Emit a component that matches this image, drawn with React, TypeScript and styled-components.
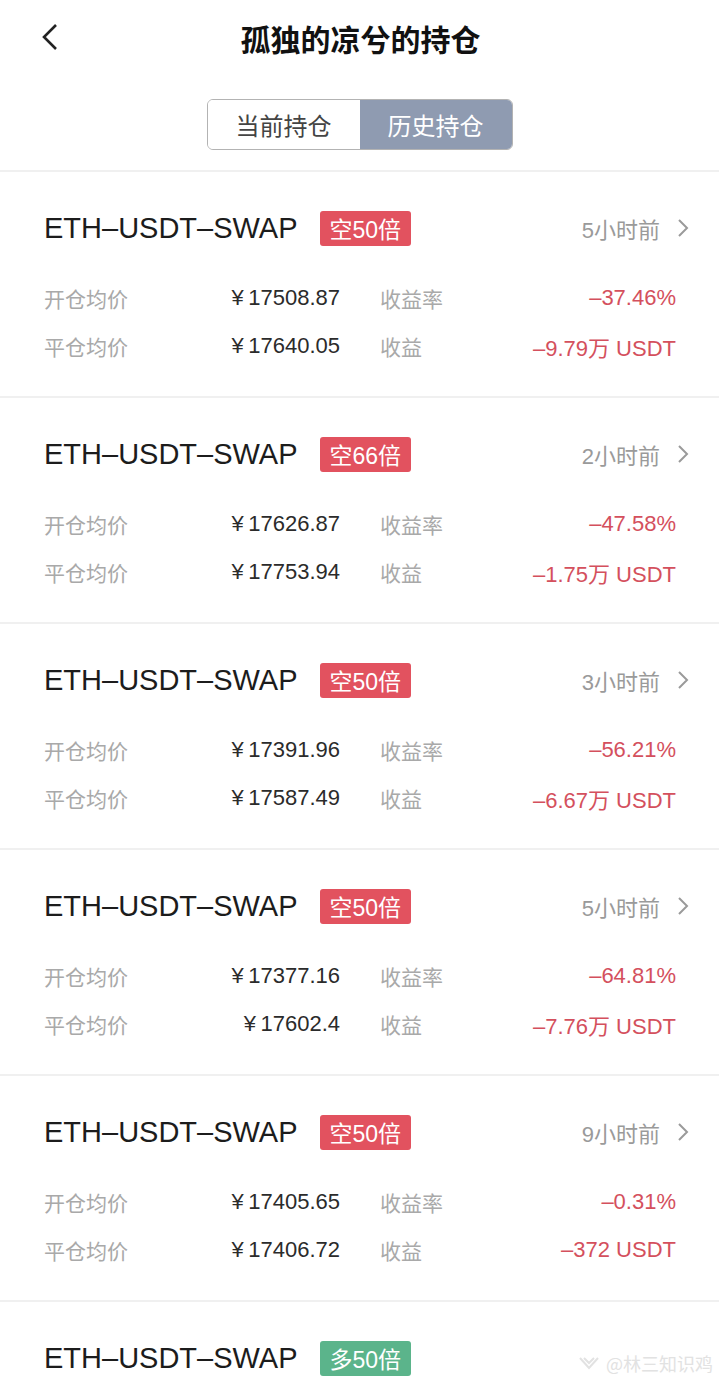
import * as React from "react";
import styled, { createGlobalStyle } from "styled-components";

const GlobalStyle = createGlobalStyle`
  html, body {
    margin: 0;
    padding: 0;
    background: #ffffff;
  }
  body {
    font-family: "Liberation Sans", "Noto Sans CJK SC", sans-serif;
    color: #222;
  }
`;

const Page = styled.div`
  position: relative;
  width: 719px;
  height: 1390px;
  overflow: hidden;
  background: #fff;
`;

const NavBar = styled.div`
  position: relative;
  height: 75px;
  display: flex;
  align-items: center;
  justify-content: center;
`;

const BackButton = styled.button`
  position: absolute;
  left: 36px;
  top: 20px;
  width: 30px;
  height: 34px;
  background: transparent;
  border: none;
  padding: 0;
  cursor: pointer;
`;

const Title = styled.h1`
  margin: 0 0 0 2px;
  font-family: "Noto Sans CJK SC", sans-serif;
  font-size: 30px;
  font-weight: 700;
  color: #111;
`;

const SegmentWrap = styled.div`
  display: flex;
  justify-content: center;
  padding: 24px 0 20px;
`;

const Segment = styled.div`
  display: flex;
  width: 306px;
  height: 51px;
  border: 1.5px solid #b3b3b3;
  border-radius: 6px;
  overflow: hidden;
  box-sizing: border-box;
`;

const SegmentItem = styled.div<{ $active?: boolean }>`
  flex: 1;
  display: flex;
  align-items: center;
  justify-content: center;
  font-family: "Noto Sans CJK SC", sans-serif;
  font-size: 24px;
  background: ${(p) => (p.$active ? "#8f9bb1" : "#fff")};
  color: ${(p) => (p.$active ? "#fff" : "#444")};
`;

const Divider = styled.div`
  height: 2px;
  background: #f0f0f0;
`;

const Card = styled.div`
  height: 224px;
  box-sizing: border-box;
  padding: 38px 0 0 44px;
`;

const CardHead = styled.div`
  display: flex;
  align-items: center;
  height: 36px;
  padding-right: 29px;
`;

const Symbol = styled.span`
  font-size: 29px;
  color: #1c1c1c;
`;

const Tag = styled.span<{ $long?: boolean }>`
  margin-left: 22px;
  height: 35px;
  display: inline-flex;
  align-items: center;
  padding: 0 10px;
  border-radius: 3px;
  font-size: 23px;
  color: #fff;
  background: ${(p) => (p.$long ? "#5bb48b" : "#e2525f")};
`;

const Time = styled.span`
  margin-left: auto;
  font-size: 22px;
  color: #9a9a9a;
  display: flex;
  align-items: center;
  gap: 16px;
`;

const Grid = styled.div`
  margin-top: 28px;
  display: grid;
  grid-template-columns: 140px 156px 190px 146px;
  grid-auto-rows: 48px;
  align-items: center;
`;

const Label = styled.span<{ $indent?: boolean }>`
  font-family: "Noto Sans CJK SC", sans-serif;
  font-size: 21px;
  color: #a9a9a9;
  padding-left: ${(p) => (p.$indent ? "40px" : "0")};
`;

const Price = styled.span`
  justify-self: end;
  font-size: 22px;
  color: #2b2b2b;
`;

const Loss = styled.span`
  justify-self: end;
  font-size: 22px;
  color: #d4505d;
  white-space: nowrap;
`;

const Watermark = styled.div`
  position: absolute;
  right: 6px;
  bottom: 14px;
  font-family: "Noto Sans CJK SC", sans-serif;
  font-size: 18px;
  color: #e2e2e2;
  display: flex;
  align-items: center;
  gap: 6px;
`;

type Position = {
  lev: string;
  long?: boolean;
  time: string;
  open: string;
  close: string;
  rate: string;
  pnl: string;
};

// thin space after the yen sign, as in the app
const data: Position[] = [
  { lev: "空50倍", time: "5小时前", open: "¥\u200917508.87", close: "¥\u200917640.05", rate: "–37.46%", pnl: "–9.79万 USDT" },
  { lev: "空66倍", time: "2小时前", open: "¥\u200917626.87", close: "¥\u200917753.94", rate: "–47.58%", pnl: "–1.75万 USDT" },
  { lev: "空50倍", time: "3小时前", open: "¥\u200917391.96", close: "¥\u200917587.49", rate: "–56.21%", pnl: "–6.67万 USDT" },
  { lev: "空50倍", time: "5小时前", open: "¥\u200917377.16", close: "¥\u200917602.4", rate: "–64.81%", pnl: "–7.76万 USDT" },
  { lev: "空50倍", time: "9小时前", open: "¥\u200917405.65", close: "¥\u200917406.72", rate: "–0.31%", pnl: "–372 USDT" },
  { lev: "多50倍", long: true, time: "", open: "", close: "", rate: "", pnl: "" },
];

function Chevron() {
  return (
    <svg width="14" height="20" viewBox="0 0 14 20">
      <polyline points="3,2 11,10 3,18" fill="none" stroke="#9a9a9a" strokeWidth="2" />
    </svg>
  );
}

function PositionCard({ p }: { p: Position }) {
  return (
    <Card>
      <CardHead>
        <Symbol>ETH–USDT–SWAP</Symbol>
        <Tag $long={p.long}>{p.lev}</Tag>
        {p.time && (
          <Time>
            {p.time}
            <Chevron />
          </Time>
        )}
      </CardHead>
      {p.open && (
        <Grid>
          <Label>开仓均价</Label>
          <Price>{p.open}</Price>
          <Label $indent>收益率</Label>
          <Loss>{p.rate}</Loss>
          <Label>平仓均价</Label>
          <Price>{p.close}</Price>
          <Label $indent>收益</Label>
          <Loss>{p.pnl}</Loss>
        </Grid>
      )}
    </Card>
  );
}

export default function App() {
  return (
    <Page>
      <GlobalStyle />
      <NavBar>
        <BackButton>
          <svg width="30" height="34" viewBox="0 0 30 34">
            <polyline points="20,5 8,17 20,29" fill="none" stroke="#222" strokeWidth="2.6" />
          </svg>
        </BackButton>
        <Title>孤独的凉兮的持仓</Title>
      </NavBar>
      <SegmentWrap>
        <Segment>
          <SegmentItem>当前持仓</SegmentItem>
          <SegmentItem $active>历史持仓</SegmentItem>
        </Segment>
      </SegmentWrap>
      {data.map((p, i) => (
        <React.Fragment key={i}>
          <Divider />
          <PositionCard p={p} />
        </React.Fragment>
      ))}
      <Watermark>
        <svg width="22" height="18" viewBox="0 0 22 18">
          <path d="M2 4 L11 14 L20 4 M6 4 L11 9 L16 4" fill="none" stroke="#e2e2e2" strokeWidth="2" />
        </svg>
        @林三知识鸡
      </Watermark>
    </Page>
  );
}
